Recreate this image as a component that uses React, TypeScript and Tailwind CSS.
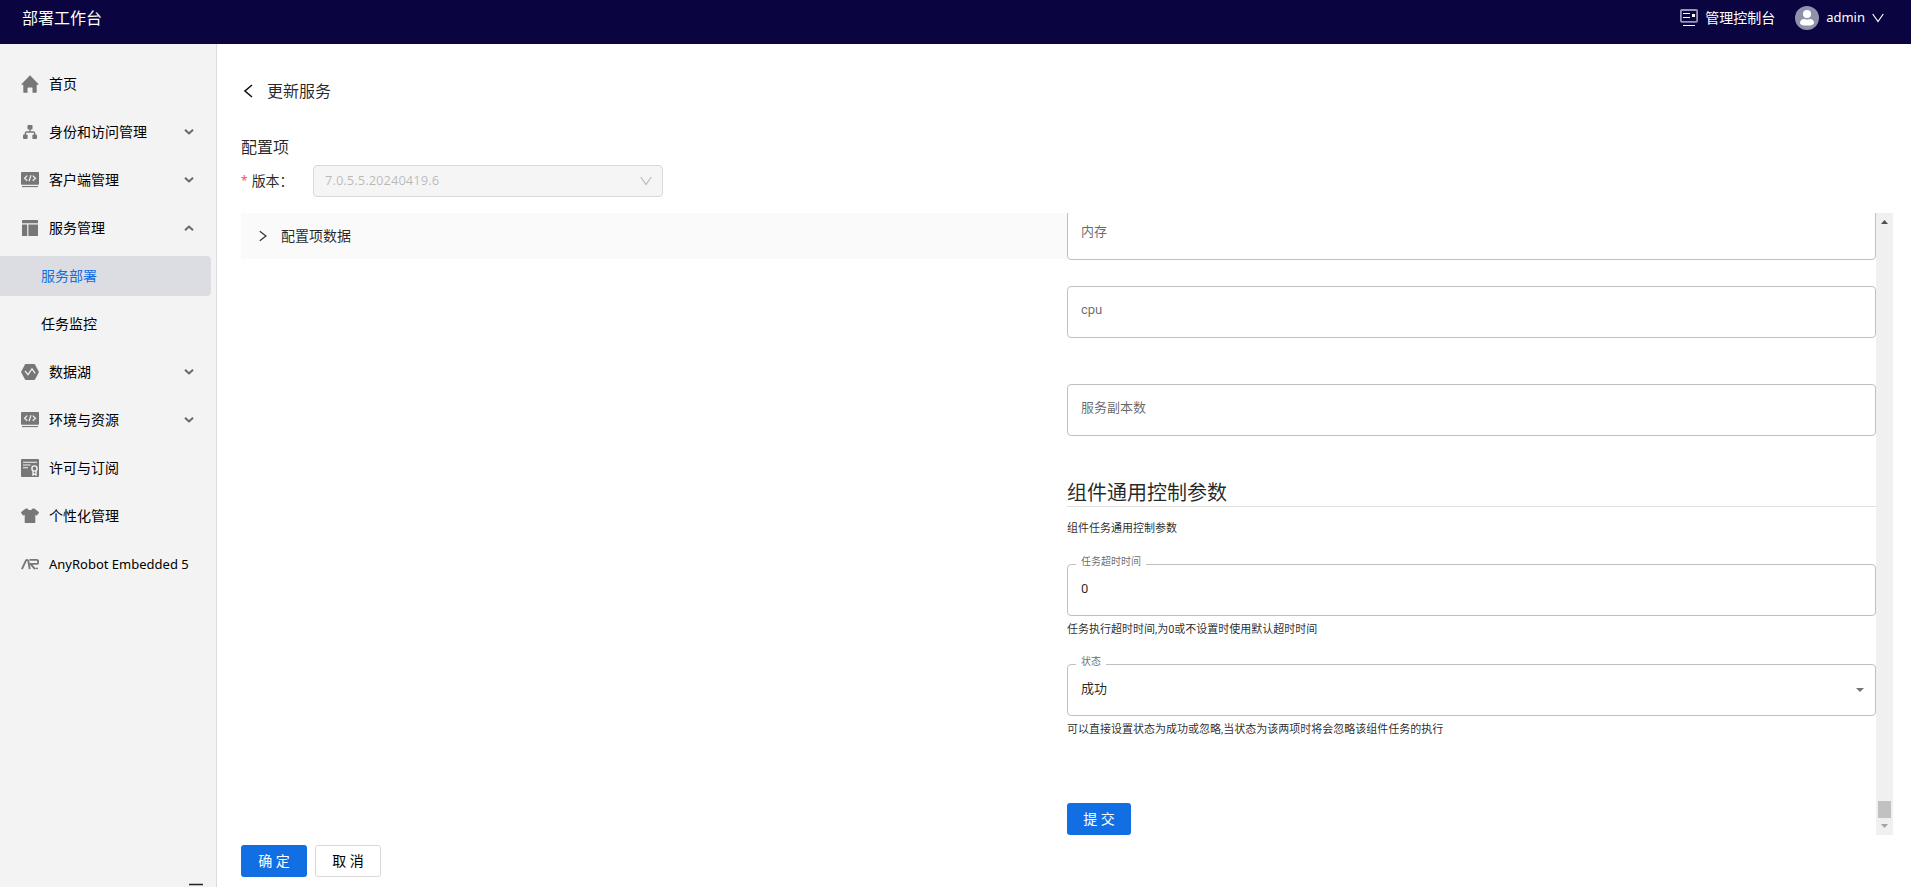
import { useState } from "react";
import type { ReactNode } from "react";

type NavItem = {
  label: string;
  icon: ReactNode;
  latin?: boolean;
  arrow?: "down" | "up";
  children?: { label: string; active?: boolean }[];
};

const HomeIcon = () => (
  <svg width="18" height="18" viewBox="0 0 18 18" fill="currentColor">
    <path d="M9 .3 17.400 8.900c.3.300.1.800-.3.800h-1.400v7.400c0 .3-.2.600-.6.600h-3.600v-4.400c0-.4-.3-.7-.7-.7H7.200c-.4 0-.7.300-.7.700v4.400H2.900c-.4 0-.6-.3-.6-.6V9.700H.9c-.4 0-.6-.5-.3-.8z" />
  </svg>
);

const OrgIcon = () => (
  <svg width="18" height="18" viewBox="0 0 18 18" fill="currentColor">
    <rect x="6.500" y="2" width="5" height="4.500" rx=".8" />
    <rect x="2" y="11.500" width="4.600" height="4.500" rx="1" />
    <rect x="11.400" y="11.500" width="4.600" height="4.500" rx="1" />
    <path d="M9 6v3M4.300 12V10.500C4.300 9.600 4.900 9 5.800 9h6.400c.9 0 1.500.6 1.500 1.500V12" fill="none" stroke="currentColor" strokeWidth="1.300" />
  </svg>
);

const CodeIcon = () => (
  <svg width="18" height="18" viewBox="0 0 18 18">
    <rect x="0" y="1" width="18" height="12.700" rx=".8" fill="currentColor" />
    <rect x="1" y="15" width="16" height="1.100" fill="currentColor" />
    <path d="M6.300 4.600 3.500 7.200l2.800 2.600M11.700 4.600l2.800 2.600-2.800 2.600M10 4.200 8 10.300" fill="none" stroke="#f3f3f3" strokeWidth="1.200" />
  </svg>
);

const LayoutIcon = () => (
  <svg width="18" height="18" viewBox="0 0 18 18" fill="currentColor">
    <path d="M1.500 1h15a.5.5 0 0 1 .5.5V4.300H1V1.500a.5.5 0 0 1 .5-.5zM1 5.500h5.200V17H1.500a.5.5 0 0 1-.5-.5zM7.400 5.500H17v11a.5.5 0 0 1-.5.5H7.400z" />
  </svg>
);

const LakeIcon = () => (
  <svg width="18" height="18" viewBox="0 0 18 18">
    <path d="M4.900 1h8.200c.4 0 .7.2.9.500l3.700 6.900c.2.400.2.800 0 1.200L14 16.500c-.2.300-.5.500-.9.500H4.900c-.4 0-.7-.2-.9-.5L.3 9.600C.1 9.200.1 8.800.3 8.400L4 1.500c.2-.3.5-.5.900-.5z" fill="currentColor" />
    <path d="M4 7.800 7 11.700 11 5.800l3.200 4.600" fill="none" stroke="#f3f3f3" strokeWidth="1.200" />
  </svg>
);

const LicenseIcon = () => (
  <svg width="18" height="18" viewBox="0 0 18 18">
    <rect x="0" y="0" width="18" height="18" rx="1" fill="currentColor" />
    <path d="M2 3.200h14M2 6h7.500M2 8.700h5" stroke="#f3f3f3" strokeWidth="1.100" />
    <circle cx="13.500" cy="9.500" r="2.600" fill="none" stroke="#f3f3f3" strokeWidth="1.400" />
    <path d="M12 11.800V16l1.500-1 1.500 1v-4.200" fill="none" stroke="#f3f3f3" strokeWidth="1.400" />
  </svg>
);

const ShirtIcon = () => (
  <svg width="18" height="18" viewBox="0 0 18 18" fill="currentColor">
    <path d="M5.300 1.500h1.200C7 2.500 7.900 3 9 3s2-.5 2.500-1.500h1.200c.3 0 .6.100.9.300l4.200 3.300c.2.200.3.500.1.700l-1.700 2.400c-.2.200-.5.300-.7.200l-1.200-.6v7.700c0 .3-.3.600-.6.600H4.300c-.3 0-.6-.3-.6-.6V7.800l-1.200.6c-.2.100-.5 0-.7-.2L.1 5.800c-.2-.2-.1-.5.1-.7l4.200-3.300c.3-.2.600-.3.900-.3z" />
  </svg>
);

const RobotIcon = () => (
  <svg width="18" height="18" viewBox="0 0 18 18" fill="none" stroke="currentColor" strokeWidth="1.900">
    <path d="M.9 14.200 4.900 5.700c.3-.6.600-.8 1.200-.8.700 0 1 .3 1.200.9l1.400 8.400" />
    <path d="M8.500 4.900h7.300c.8 0 1.300.4 1.300 1.200v1.600c0 .8-.5 1.200-1.300 1.200H9.500l4.500 5.300" />
    <path d="M14.500 13.400H17" strokeWidth="1.400" />
  </svg>
);

const NAV: NavItem[] = [
  { label: "首页", icon: <HomeIcon /> },
  { label: "身份和访问管理", icon: <OrgIcon />, arrow: "down" },
  { label: "客户端管理", icon: <CodeIcon />, arrow: "down" },
  {
    label: "服务管理",
    icon: <LayoutIcon />,
    arrow: "up",
    children: [{ label: "服务部署", active: true }, { label: "任务监控" }],
  },
  { label: "数据湖", icon: <LakeIcon />, arrow: "down" },
  { label: "环境与资源", icon: <CodeIcon />, arrow: "down" },
  { label: "许可与订阅", icon: <LicenseIcon /> },
  { label: "个性化管理", icon: <ShirtIcon /> },
  { label: "AnyRobot Embedded 5", icon: <RobotIcon />, latin: true },
];

function NavArrow({ dir }: { dir: "down" | "up" }) {
  return (
    <svg width="10" height="6" viewBox="0 0 10 6" fill="none" stroke="#666" strokeWidth="2">
      <path d={dir === "down" ? "M1 .8 5 4.400 9 .8" : "M1 5.200 5 1.600 9 5.200"} />
    </svg>
  );
}

function Chevron({ className = "" }: { className?: string }) {
  return (
    <svg className={className} width="12" height="10" viewBox="0 0 12 10" fill="none" stroke="currentColor" strokeWidth="1.200">
      <path d="M.7 1 6 8.500 11.300 1" />
    </svg>
  );
}

function Header() {
  return (
    <header className="flex h-11 shrink-0 items-center justify-between bg-[#0a0541] pr-[27px] pb-2 pl-[22px] text-white">
      <h1 className="text-[16px]">部署工作台</h1>
      <div className="flex items-center gap-5">
        <a href="#console" className="flex items-center gap-[7px] text-sm">
          <svg width="18" height="18" viewBox="0 0 18 18" fill="none">
            <rect x=".9" y="1" width="16.200" height="11.800" rx=".8" stroke="#9795b5" strokeWidth="1.800" />
            <path d="M3 4.500h7M3 8.500h7M3 16.500h12" stroke="#fff" strokeWidth="1.100" />
            <rect x="12" y="5" width="3" height="3" fill="#fff" />
          </svg>
          管理控制台
        </a>
        <button type="button" className="flex items-center gap-[7px] text-[13px]">
          <svg width="24" height="24" viewBox="0 0 24 24">
            <circle cx="12" cy="12" r="12" fill="#8f92ab" />
            <circle cx="12" cy="8" r="4" fill="#fff" />
            <path d="M5 17c0-2.700 2-4 4-4 1 .6 5 .6 6 0 2 0 4 1.300 4 4 0 1.600-2.500 2.600-7 2.600S5 18.600 5 17z" fill="#fff" />
          </svg>
          admin
          <Chevron />
        </button>
      </div>
    </header>
  );
}

function Sidebar() {
  return (
    <aside className="flex w-[217px] shrink-0 flex-col overflow-hidden border-r border-[#dcdcdc] bg-[#f3f3f3] pt-5">
      <nav className="flex flex-col gap-2 pr-[5px] text-sm text-black">
        {NAV.map((item) => (
          <div key={item.label} className="flex flex-col gap-2">
            <a href="#nav" className="flex h-10 items-center gap-[10px] pr-[17px] pl-[21px]">
              <span className="text-[#777777]">{item.icon}</span>
              <span className={`flex-1 whitespace-nowrap ${item.latin ? "text-[13px]" : ""}`}>{item.label}</span>
              {item.arrow && <NavArrow dir={item.arrow} />}
            </a>
            {item.children?.map((sub) => (
              <a
                key={sub.label}
                href="#sub"
                className={`flex h-10 items-center rounded-r-sm pl-[41px] ${
                  sub.active ? "bg-[#dcdde2] text-[#126ee3]" : ""
                }`}
              >
                {sub.label}
              </a>
            ))}
          </div>
        ))}
      </nav>
      {/* Collapse toggle */}
      <button type="button" aria-label="collapse" className="mt-auto mr-[13px] flex h-1 items-start self-end">
        <svg width="14" height="14" viewBox="0 0 14 14" className="shrink-0" stroke="#222" strokeWidth="1.400">
          <path d="M0 1.500h14M5 7h9M0 12.500h14" />
        </svg>
      </button>
    </aside>
  );
}

const BOX =
  "block h-[52px] w-full appearance-none rounded border border-[#c0c0c0] bg-white px-[13px] pb-[3px] text-[13px] text-black/85 outline-none";

function TextField({ id, label }: { id: string; label: string }) {
  return (
    <div className="relative shrink-0">
      <input id={id} type="text" className={BOX} />
      <label
        htmlFor={id}
        className="absolute inset-y-0 left-[14px] flex items-center pb-[4px] text-[13px] text-black/60"
      >
        {label}
      </label>
    </div>
  );
}

function FloatLabel({ id, children }: { id: string; children: string }) {
  return (
    <label htmlFor={id} className="absolute -top-[10px] left-[9px] bg-white px-[5px] text-[10px] leading-4 text-black/60">
      {children}
    </label>
  );
}

function ConfigForm() {
  const [timeout, setTimeoutValue] = useState("0");
  const [status, setStatus] = useState("success");

  return (
    <form className="flex min-w-0 flex-1 flex-col justify-end overflow-hidden font-['Roboto','Noto_Sans_CJK_SC',sans-serif]">
      <TextField id="memory" label="内存" />
      <div className="mt-[26px] mb-[46px]">
        <TextField id="cpu" label="cpu" />
      </div>
      <TextField id="replicas" label="服务副本数" />

      <h2 className="mt-11 border-b border-[#e0e0e0] text-xl leading-[26px] text-black/85">组件通用控制参数</h2>
      <p className="mt-3 text-[11px] leading-5 text-black/85">组件任务通用控制参数</p>

      <div className="relative mt-[25px] shrink-0">
        <input
          id="timeout"
          type="text"
          value={timeout}
          onChange={(e) => setTimeoutValue(e.target.value)}
          className={BOX}
        />
        <FloatLabel id="timeout">任务超时时间</FloatLabel>
      </div>
      <p className="mt-1 text-[11px] leading-5 text-black/85">任务执行超时时间,为0或不设置时使用默认超时时间</p>

      <div className="relative mt-6 shrink-0">
        <select id="status" value={status} onChange={(e) => setStatus(e.target.value)} className={BOX}>
          <option value="success">成功</option>
          <option value="ignore">忽略</option>
        </select>
        <FloatLabel id="status">状态</FloatLabel>
        <svg className="pointer-events-none absolute top-6 right-3" width="8" height="4" viewBox="0 0 8 4" fill="#757575">
          <path d="M0 0h8L4 4z" />
        </svg>
      </div>
      <p className="mt-1 text-[11px] leading-5 text-black/85">
        可以直接设置状态为成功或忽略,当状态为该两项时将会忽略该组件任务的执行
      </p>

      <button type="button" className="mt-[63px] h-8 w-16 shrink-0 rounded-[3px] bg-[#126ee3] text-sm text-white">
        提 交
      </button>
    </form>
  );
}

function ScrollBar() {
  return (
    <div className="flex w-[17px] shrink-0 flex-col items-center bg-[#f0f0f0]">
      <svg width="17" height="17" viewBox="0 0 17 17" fill="#505050">
        <path d="M5 11h7L8.500 7z" />
      </svg>
      <div className="mt-auto h-[17px] w-[13px] bg-[#c1c1c1]" />
      <svg width="17" height="17" viewBox="0 0 17 17" fill="#a3a3a3">
        <path d="M5 6h7L8.500 10z" />
      </svg>
    </div>
  );
}

export default function App() {
  return (
    <div className="flex h-screen flex-col overflow-hidden bg-white font-['Noto_Sans','Noto_Sans_CJK_SC',sans-serif]">
      <Header />
      <div className="flex min-h-0 flex-1">
        <Sidebar />
        <main className="flex min-w-0 flex-1 flex-col pt-[35px] pr-[18px] pb-[10px] pl-6 text-black/85">
          <div className="flex items-center gap-[14px]">
            <button type="button" aria-label="back" className="pl-[2px]">
              <svg width="10" height="14" viewBox="0 0 10 14" fill="none" stroke="#111" strokeWidth="1.600">
                <path d="M9 1 2 7l7 6" />
              </svg>
            </button>
            <h2 className="text-base">更新服务</h2>
          </div>

          <h3 className="mt-8 text-base leading-6">配置项</h3>
          <div className="mt-[6px] flex items-center">
            <label htmlFor="version" className="flex w-[72px] items-center gap-1 text-sm">
              <span className="text-xs text-[#ff4d4f]">*</span>版本：
            </label>
            <div className="relative w-[350px]">
              <select
                id="version"
                disabled
                className="h-8 w-full appearance-none rounded-sm border border-[#d9d9d9] bg-[#f5f5f5] px-[11px] text-[13px] text-black/25 opacity-100"
              >
                <option>7.0.5.5.20240419.6</option>
              </select>
              <Chevron className="pointer-events-none absolute top-[11px] right-[11px] text-black/25" />
            </div>
          </div>

          <div className="mt-4 flex min-h-0 flex-1">
            <div className="flex min-w-0 flex-1">
              <div className="shrink-0 grow-0 basis-[826px]">
                <button type="button" className="flex h-[46px] w-full items-center gap-[14px] bg-[#fafafa] pl-[18px] text-sm">
                  <svg width="8" height="12" viewBox="0 0 8 12" fill="none" stroke="#333" strokeWidth="1.200">
                    <path d="M.8 1.200 7 6 .8 10.800" />
                  </svg>
                  配置项数据
                </button>
              </div>
              <ConfigForm />
            </div>
            <ScrollBar />
          </div>

          <div className="mt-[10px] flex gap-2 text-sm">
            <button type="button" className="h-8 w-[66px] rounded-[3px] bg-[#126ee3] text-white">
              确 定
            </button>
            <button type="button" className="h-8 w-[66px] rounded-[3px] border border-[#d9d9d9] bg-white text-black">
              取 消
            </button>
          </div>
        </main>
      </div>
    </div>
  );
}
